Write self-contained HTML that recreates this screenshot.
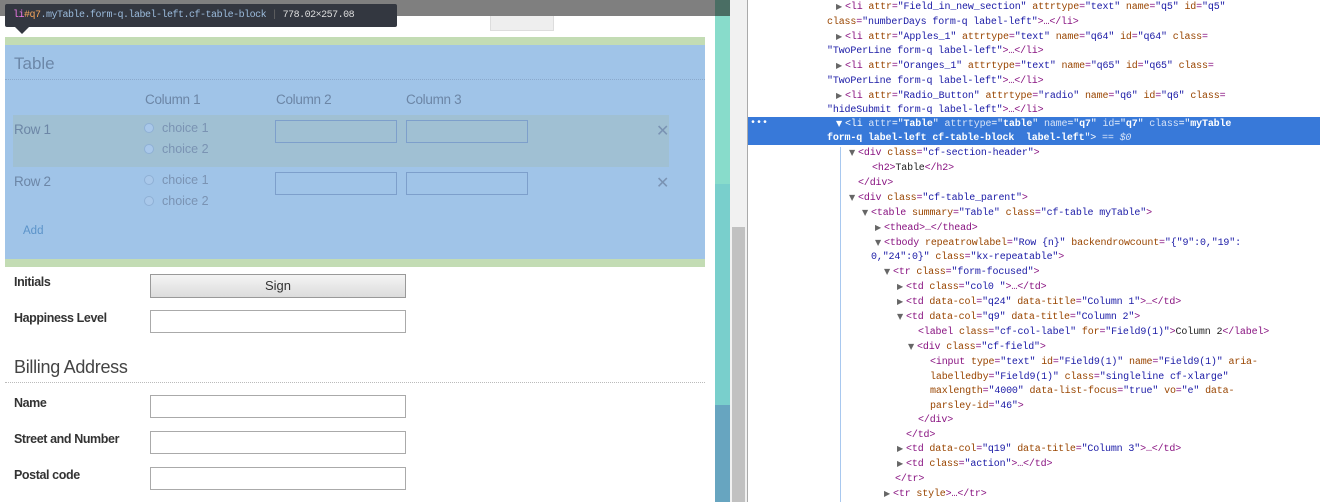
<!DOCTYPE html>
<html><head><meta charset="utf-8"><style>
*{margin:0;padding:0;box-sizing:border-box}
body{width:1320px;height:502px;overflow:hidden;background:#fff;position:relative;font-family:"Liberation Sans",Arial,sans-serif}
.abs{position:absolute}
.lbl{position:absolute;font-size:12.5px;font-weight:bold;color:#333;letter-spacing:-0.4px}
.inp{position:absolute;left:150px;width:256px;height:23px;border:1px solid #aaa;background:#fff}
.code{position:absolute;font-family:"Liberation Mono",monospace;font-size:10px;letter-spacing:-0.15px;line-height:15px;white-space:pre;color:#881280}
.t{color:#881280}.a{color:#994500}.v{color:#1a1aa6}.g{color:#888}
.tri{position:absolute;font-size:8px;color:#666;font-family:"DejaVu Sans",sans-serif;line-height:13px}
.sel .t,.sel .a,.sel .v,.sel{color:#fff}
.sel .a{color:#d6e3f7}
.cb{position:absolute;font-size:13.5px;color:#6c86a6;letter-spacing:-0.3px}
.rad{position:absolute;width:10px;height:10px;border-radius:50%;border:1px solid #8fb0d5;background:#a9c8ea}
.ch{position:absolute;font-size:12.5px;color:#7a93b3}
.ti{position:absolute;width:122px;height:23px;border:1px solid #7d9fcb}
</style></head><body>
<div class="abs" style="left:490px;top:7px;width:64px;height:24px;background:#eee;border:1px solid #ddd"></div>
<div class="abs" style="left:0;top:0;width:715px;height:16px;background:#7f7f7f"></div>
<div class="abs" style="left:5px;top:37px;width:700px;height:230px;background:#c3dcb4"></div>
<div class="abs" style="left:5px;top:45px;width:700px;height:214px;background:#a0c4e8"></div>
<div class="abs" style="left:14px;top:54px;font-size:17px;color:#6c87a8">Table</div>
<div class="abs" style="left:5px;top:79px;width:700px;border-top:1px dotted #8aa9cc"></div>
<div class="cb" style="left:145px;top:92px">Column 1</div>
<div class="cb" style="left:276px;top:92px">Column 2</div>
<div class="cb" style="left:406px;top:92px">Column 3</div>
<div class="abs" style="left:13px;top:115px;width:656px;height:52px;background:#a0c0d3"></div>
<div class="cb" style="left:14px;top:122px">Row 1</div>
<div class="cb" style="left:14px;top:174px">Row 2</div>
<div class="rad" style="left:144px;top:123px"></div><div class="ch" style="left:162px;top:121px">choice 1</div>
<div class="rad" style="left:144px;top:144px"></div><div class="ch" style="left:162px;top:142px">choice 2</div>
<div class="rad" style="left:144px;top:175px"></div><div class="ch" style="left:162px;top:173px">choice 1</div>
<div class="rad" style="left:144px;top:196px"></div><div class="ch" style="left:162px;top:194px">choice 2</div>
<div class="ti" style="left:275px;top:120px"></div><div class="ti" style="left:406px;top:120px"></div>
<div class="ti" style="left:275px;top:172px"></div><div class="ti" style="left:406px;top:172px"></div>
<div class="abs" style="left:656px;top:121px;font-size:16px;color:#7a93b3">✕</div>
<div class="abs" style="left:656px;top:173px;font-size:16px;color:#7a93b3">✕</div>
<div class="abs" style="left:23px;top:225px;font-size:11.5px;color:#5b93c9">Add</div>
<div class="abs" style="left:5px;top:4px;width:392px;height:23px;background:#333740;border-radius:2px;font-family:'Liberation Mono',monospace;font-size:10px;line-height:23px;padding-left:8px;color:#9bbbdc;white-space:pre;letter-spacing:-0.5px;overflow:hidden"><span style="color:#ee78e6">li</span><span style="color:#f2a35a">#q7</span>.myTable.form-q.label-left.cf-table-block <span style="color:#666">|</span> <span style="color:#ddd">778.02×257.08</span></div>
<div class="abs" style="left:15px;top:27px;border-left:7px solid transparent;border-right:7px solid transparent;border-top:7px solid #333740"></div>
<div class="lbl" style="left:14px;top:275px">Initials</div>
<div class="abs" style="left:150px;top:274px;width:256px;height:24px;border:1px solid #999;background:linear-gradient(#f4f4f4,#dcdcdc);text-align:center;font-size:13px;line-height:22px;color:#333">Sign</div>
<div class="lbl" style="left:14px;top:311px">Happiness Level</div>
<div class="inp" style="top:310px"></div>
<div class="abs" style="left:14px;top:357px;font-size:18px;color:#444;letter-spacing:-0.3px">Billing Address</div>
<div class="abs" style="left:5px;top:382px;width:700px;border-top:1px dotted #bbb"></div>
<div class="lbl" style="left:14px;top:396px">Name</div><div class="inp" style="top:395px"></div>
<div class="lbl" style="left:14px;top:432px">Street and Number</div><div class="inp" style="top:431px"></div>
<div class="lbl" style="left:14px;top:468px">Postal code</div><div class="inp" style="top:467px"></div>
<div class="abs" style="left:715px;top:0;width:15px;height:502px;background:linear-gradient(#88dccb 0,#88dccb 184px,#79cfcc 184px,#79cfcc 405px,#67a5c0 405px)"></div>
<div class="abs" style="left:715px;top:0;width:15px;height:16px;background:#4a6e64"></div>
<div class="abs" style="left:730px;top:0;width:17px;height:502px;background:#f1f1f1"></div>
<div class="abs" style="left:732px;top:227px;width:13px;height:275px;background:#c1c1c1"></div>
<div class="abs" style="left:747px;top:0;width:1px;height:502px;background:#aaa"></div>
<div class="abs" style="left:748px;top:117px;width:572px;height:28px;background:#3879d9"></div>
<div class="abs" style="left:750px;top:117px;color:#fff;font-size:10px;line-height:14px;font-family:'Liberation Mono',monospace">•••</div>
<div class="abs" style="left:840px;top:147px;width:1px;height:355px;background:#a8c8ef"></div>
<div class="tri" style="left:836px;top:0">▶</div><div class="code" style="left:845px;top:0">&lt;li <span class="a">attr</span>=<span class="v">"Field_in_new_section"</span> <span class="a">attrtype</span>=<span class="v">"text"</span> <span class="a">name</span>=<span class="v">"q5"</span> <span class="a">id</span>=<span class="v">"q5"</span></div>
<div class="code" style="left:827px;top:15px"><span class="a">class</span>=<span class="v">"numberDays form-q label-left"</span>&gt;…&lt;/li&gt;</div>
<div class="tri" style="left:836px;top:30px">▶</div><div class="code" style="left:845px;top:30px">&lt;li <span class="a">attr</span>=<span class="v">"Apples_1"</span> <span class="a">attrtype</span>=<span class="v">"text"</span> <span class="a">name</span>=<span class="v">"q64"</span> <span class="a">id</span>=<span class="v">"q64"</span> <span class="a">class</span>=</div>
<div class="code" style="left:827px;top:44px"><span class="v">"TwoPerLine form-q label-left"</span>&gt;…&lt;/li&gt;</div>
<div class="tri" style="left:836px;top:59px">▶</div><div class="code" style="left:845px;top:59px">&lt;li <span class="a">attr</span>=<span class="v">"Oranges_1"</span> <span class="a">attrtype</span>=<span class="v">"text"</span> <span class="a">name</span>=<span class="v">"q65"</span> <span class="a">id</span>=<span class="v">"q65"</span> <span class="a">class</span>=</div>
<div class="code" style="left:827px;top:74px"><span class="v">"TwoPerLine form-q label-left"</span>&gt;…&lt;/li&gt;</div>
<div class="tri" style="left:836px;top:89px">▶</div><div class="code" style="left:845px;top:89px">&lt;li <span class="a">attr</span>=<span class="v">"Radio_Button"</span> <span class="a">attrtype</span>=<span class="v">"radio"</span> <span class="a">name</span>=<span class="v">"q6"</span> <span class="a">id</span>=<span class="v">"q6"</span> <span class="a">class</span>=</div>
<div class="code" style="left:827px;top:103px"><span class="v">"hideSubmit form-q label-left"</span>&gt;…&lt;/li&gt;</div>
<div class="tri" style="left:836px;top:117px;color:#fff">▼</div><div class="code sel" style="left:845px;top:117px">&lt;li <span class="a">attr</span>="<b>Table</b>" <span class="a">attrtype</span>="<b>table</b>" <span class="a">name</span>="<b>q7</b>" <span class="a">id</span>="<b>q7</b>" <span class="a">class</span>="<b>myTable</b></div>
<div class="code sel" style="left:827px;top:131px"><b>form-q label-left cf-table-block  label-left</b>"&gt; <span class="a">== <i>$0</i></span></div>
<div class="tri" style="left:849px;top:146px">▼</div><div class="code" style="left:858px;top:146px">&lt;div <span class="a">class</span>=<span class="v">"cf-section-header"</span>&gt;</div>
<div class="code" style="left:872px;top:161px">&lt;h2&gt;<span style="color:#222">Table</span>&lt;/h2&gt;</div>
<div class="code" style="left:858px;top:176px">&lt;/div&gt;</div>
<div class="tri" style="left:849px;top:191px">▼</div><div class="code" style="left:858px;top:191px">&lt;div <span class="a">class</span>=<span class="v">"cf-table_parent"</span>&gt;</div>
<div class="tri" style="left:862px;top:206px">▼</div><div class="code" style="left:871px;top:206px">&lt;table <span class="a">summary</span>=<span class="v">"Table"</span> <span class="a">class</span>=<span class="v">"cf-table myTable"</span>&gt;</div>
<div class="tri" style="left:875px;top:221px">▶</div><div class="code" style="left:884px;top:221px">&lt;thead&gt;…&lt;/thead&gt;</div>
<div class="tri" style="left:875px;top:236px">▼</div><div class="code" style="left:884px;top:236px">&lt;tbody <span class="a">repeatrowlabel</span>=<span class="v">"Row {n}"</span> <span class="a">backendrowcount</span>=<span class="v">"{"9":0,"19":</span></div>
<div class="code" style="left:871px;top:250px"><span class="v">0,"24":0}"</span> <span class="a">class</span>=<span class="v">"kx-repeatable"</span>&gt;</div>
<div class="tri" style="left:884px;top:265px">▼</div><div class="code" style="left:893px;top:265px">&lt;tr <span class="a">class</span>=<span class="v">"form-focused"</span>&gt;</div>
<div class="tri" style="left:897px;top:280px">▶</div><div class="code" style="left:906px;top:280px">&lt;td <span class="a">class</span>=<span class="v">"col0 "</span>&gt;…&lt;/td&gt;</div>
<div class="tri" style="left:897px;top:295px">▶</div><div class="code" style="left:906px;top:295px">&lt;td <span class="a">data-col</span>=<span class="v">"q24"</span> <span class="a">data-title</span>=<span class="v">"Column 1"</span>&gt;…&lt;/td&gt;</div>
<div class="tri" style="left:897px;top:310px">▼</div><div class="code" style="left:906px;top:310px">&lt;td <span class="a">data-col</span>=<span class="v">"q9"</span> <span class="a">data-title</span>=<span class="v">"Column 2"</span>&gt;</div>
<div class="code" style="left:918px;top:325px">&lt;label <span class="a">class</span>=<span class="v">"cf-col-label"</span> <span class="a">for</span>=<span class="v">"Field9(1)"</span>&gt;<span style="color:#222">Column 2</span>&lt;/label&gt;</div>
<div class="tri" style="left:908px;top:340px">▼</div><div class="code" style="left:917px;top:340px">&lt;div <span class="a">class</span>=<span class="v">"cf-field"</span>&gt;</div>
<div class="code" style="left:930px;top:355px">&lt;input <span class="a">type</span>=<span class="v">"text"</span> <span class="a">id</span>=<span class="v">"Field9(1)"</span> <span class="a">name</span>=<span class="v">"Field9(1)"</span> <span class="a">aria-</span></div>
<div class="code" style="left:930px;top:370px"><span class="a">labelledby</span>=<span class="v">"Field9(1)"</span> <span class="a">class</span>=<span class="v">"singleline cf-xlarge"</span></div>
<div class="code" style="left:930px;top:384px"><span class="a">maxlength</span>=<span class="v">"4000"</span> <span class="a">data-list-focus</span>=<span class="v">"true"</span> <span class="a">vo</span>=<span class="v">"e"</span> <span class="a">data-</span></div>
<div class="code" style="left:930px;top:399px"><span class="a">parsley-id</span>=<span class="v">"46"</span>&gt;</div>
<div class="code" style="left:918px;top:413px">&lt;/div&gt;</div>
<div class="code" style="left:906px;top:428px">&lt;/td&gt;</div>
<div class="tri" style="left:897px;top:442px">▶</div><div class="code" style="left:906px;top:442px">&lt;td <span class="a">data-col</span>=<span class="v">"q19"</span> <span class="a">data-title</span>=<span class="v">"Column 3"</span>&gt;…&lt;/td&gt;</div>
<div class="tri" style="left:897px;top:457px">▶</div><div class="code" style="left:906px;top:457px">&lt;td <span class="a">class</span>=<span class="v">"action"</span>&gt;…&lt;/td&gt;</div>
<div class="code" style="left:895px;top:472px">&lt;/tr&gt;</div>
<div class="tri" style="left:884px;top:487px">▶</div><div class="code" style="left:893px;top:487px">&lt;tr <span class="a">style</span>&gt;…&lt;/tr&gt;</div>
</body></html>
